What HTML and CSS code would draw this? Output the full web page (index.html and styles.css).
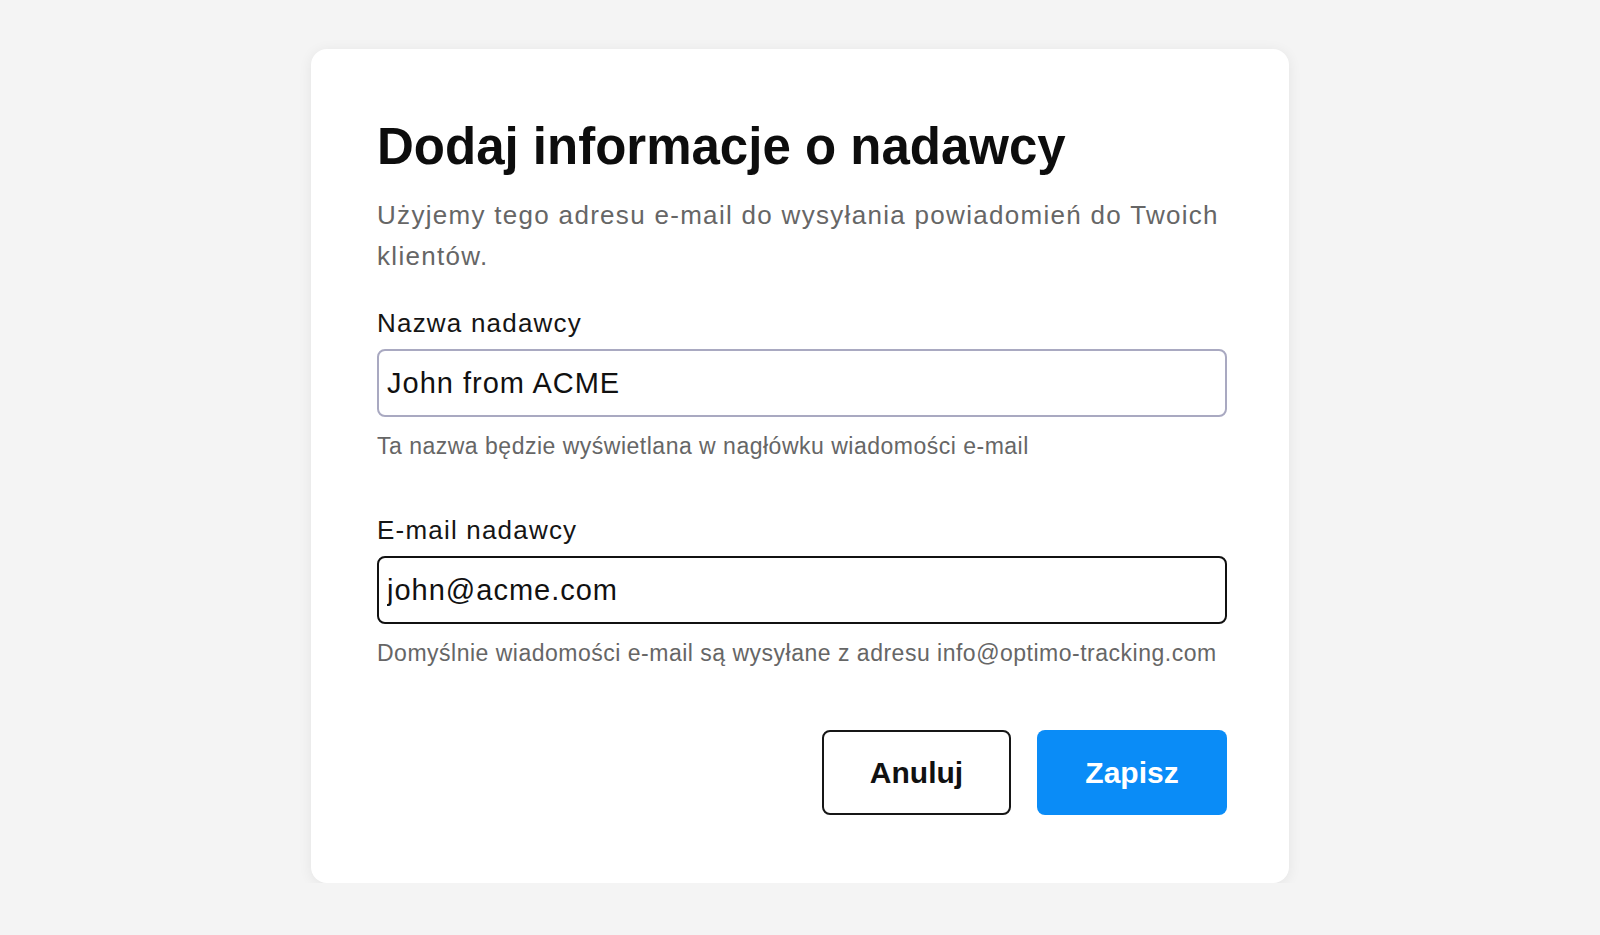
FILE: index.html
```html
<!DOCTYPE html>
<html lang="pl">
<head>
    <meta charset="UTF-8">
    <meta name="viewport" content="width=device-width, initial-scale=1.0">
    <title>Dodaj informacje o nadawcy</title>
    <link rel="stylesheet" href="styles.css">
</head>
<body>
    <div class="page">
        <div class="dialog">
            <h1 class="dialog-title">Dodaj informacje o nadawcy</h1>
            <p class="dialog-desc">Użyjemy tego adresu e-mail do wysyłania powiadomień do Twoich klientów.</p>

            <div class="field">
                <label class="field-label" for="sender-name">Nazwa nadawcy</label>
                <input class="field-input" id="sender-name" type="text" value="John from ACME">
                <div class="field-hint">Ta nazwa będzie wyświetlana w nagłówku wiadomości e-mail</div>
            </div>

            <div class="field field-last">
                <label class="field-label" for="sender-email">E-mail nadawcy</label>
                <input class="field-input field-input-active" id="sender-email" type="email" value="john@acme.com">
                <div class="field-hint">Domyślnie wiadomości e-mail są wysyłane z adresu info@optimo-tracking.com</div>
            </div>

            <div class="actions">
                <button class="btn btn-secondary" type="button">Anuluj</button>
                <button class="btn btn-primary" type="button">Zapisz</button>
            </div>
        </div>
    </div>
</body>
</html>
```

FILE: styles.css
```css
* {
    margin: 0;
    padding: 0;
    box-sizing: border-box;
}

body {
    font-family: "Liberation Sans", Arial, Helvetica, sans-serif;
    background-color: #f4f4f4;
    color: #111;
}

.page {
    display: flex;
    justify-content: center;
    padding-top: 49px;
}

.dialog {
    width: 978px;
    background: #fff;
    border-radius: 16px;
    box-shadow: 0 2px 14px rgba(0, 0, 0, 0.07);
    padding: 70px 62px 68px 66px;
}

.dialog-title {
    font-size: 51px;
    line-height: 56px;
    font-weight: bold;
    color: #0d0d0d;
}

.dialog-desc {
    margin-top: 20px;
    font-size: 26px;
    line-height: 41px;
    letter-spacing: 1.3px;
    color: #666;
}

.field {
    margin-top: 31px;
}

.field-last {
    margin-top: 55px;
}

.field-label {
    display: block;
    font-size: 26px;
    line-height: 30px;
    letter-spacing: 1.2px;
    color: #151515;
}

.field-input {
    display: block;
    width: 100%;
    height: 68px;
    margin-top: 11px;
    padding: 0 8px;
    font-family: inherit;
    font-size: 29px;
    letter-spacing: 1px;
    color: #111;
    background: #fff;
    border: 2px solid #a9a9c1;
    border-radius: 8px;
    outline: none;
}

.field-input-active {
    border-color: #111;
}

.field-hint {
    margin-top: 15px;
    font-size: 23px;
    line-height: 28px;
    letter-spacing: 0.5px;
    color: #666;
}

.actions {
    display: flex;
    justify-content: flex-end;
    gap: 26px;
    margin-top: 63px;
}

.btn {
    width: 189px;
    height: 85px;
    font-family: inherit;
    font-size: 30px;
    font-weight: bold;
    border-radius: 8px;
    cursor: pointer;
}

.btn-secondary {
    background: #fff;
    color: #111;
    border: 2px solid #161616;
}

.btn-primary {
    width: 190px;
    background: #0a8cf7;
    color: #fff;
    border: none;
}
```
